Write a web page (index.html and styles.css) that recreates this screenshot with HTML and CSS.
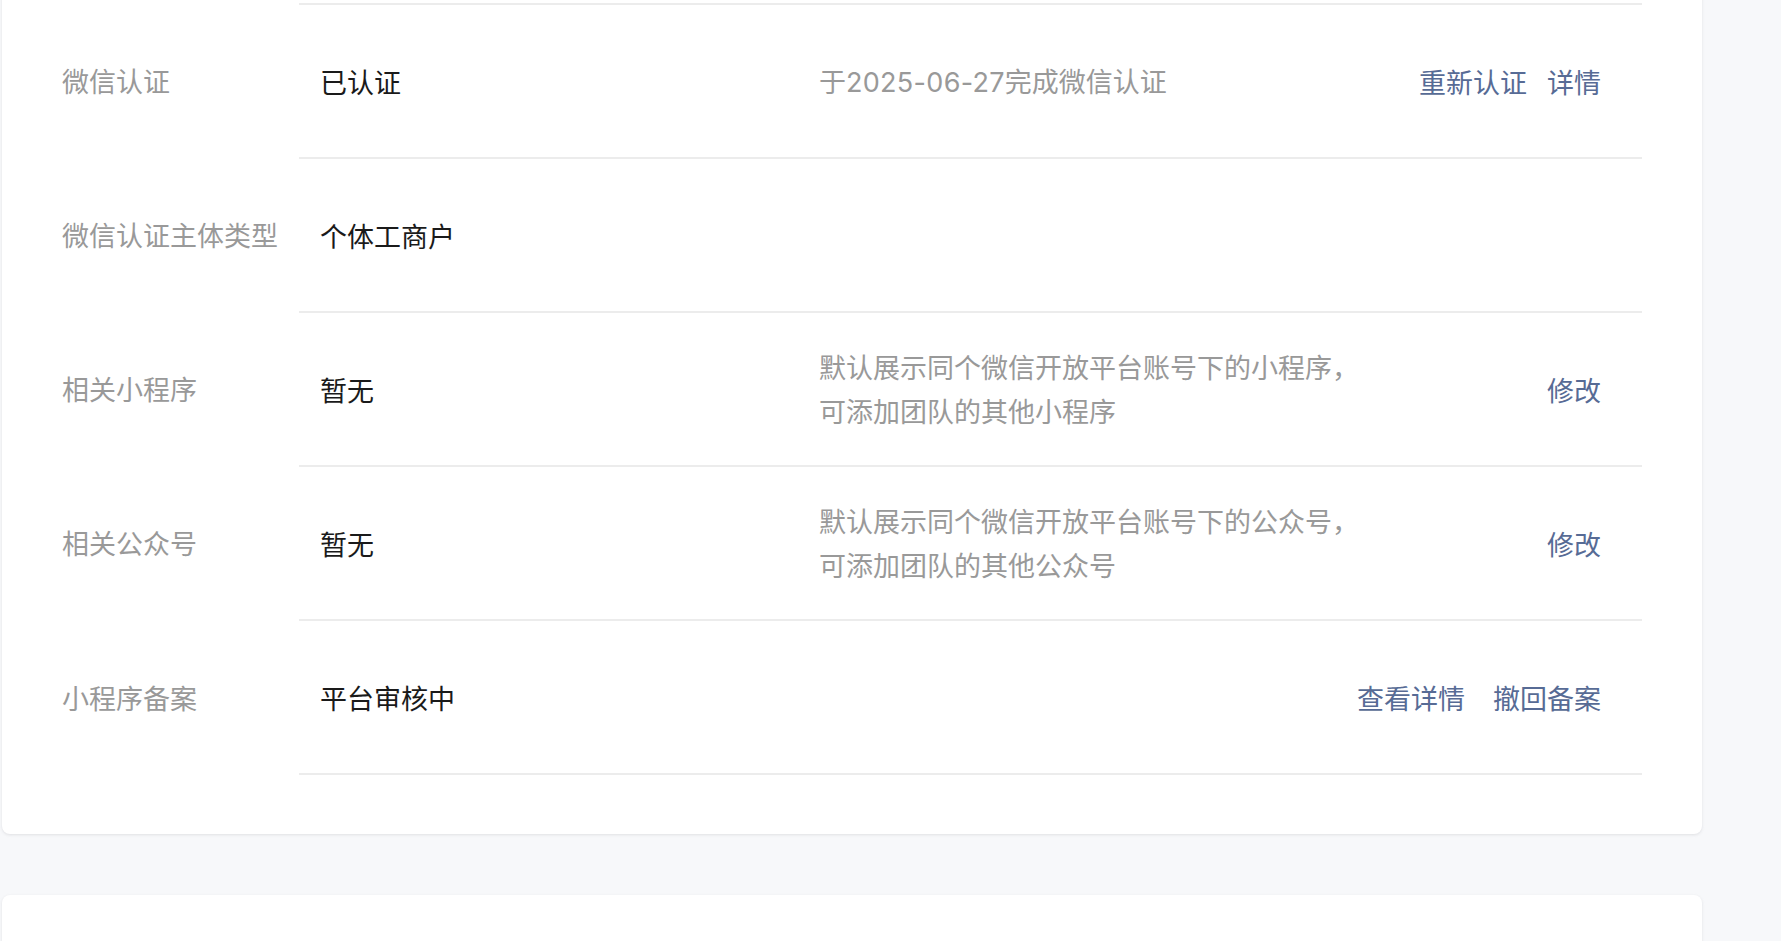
FILE: index.html
```html
<!DOCTYPE html>
<html lang="zh-CN">
<head>
<meta charset="utf-8">
<title>账号信息</title>
<link rel="stylesheet" href="styles.css">
</head>
<body>
<main class="page">
  <section class="card card-info">
    <div class="row">
      <div class="label">微信认证</div>
      <div class="cell">
        <div class="value">已认证</div>
        <div class="desc">于<span class="num">2025-06-27</span>完成微信认证</div>
        <div class="actions"><a class="link" href="#">重新认证</a><a class="link" href="#">详情</a></div>
      </div>
    </div>
    <div class="row">
      <div class="label">微信认证主体类型</div>
      <div class="cell">
        <div class="value">个体工商户</div>
        <div class="desc"></div>
        <div class="actions"></div>
      </div>
    </div>
    <div class="row">
      <div class="label">相关小程序</div>
      <div class="cell">
        <div class="value">暂无</div>
        <div class="desc">默认展示同个微信开放平台账号下的小程序，可添加团队的其他小程序</div>
        <div class="actions"><a class="link" href="#">修改</a></div>
      </div>
    </div>
    <div class="row">
      <div class="label">相关公众号</div>
      <div class="cell">
        <div class="value">暂无</div>
        <div class="desc">默认展示同个微信开放平台账号下的公众号，可添加团队的其他公众号</div>
        <div class="actions"><a class="link" href="#">修改</a></div>
      </div>
    </div>
    <div class="row row-last">
      <div class="label">小程序备案</div>
      <div class="cell">
        <div class="value">平台审核中</div>
        <div class="desc"></div>
        <div class="actions actions-wide"><a class="link" href="#">查看详情</a><a class="link" href="#">撤回备案</a></div>
      </div>
    </div>
  </section>
  <section class="card card-next"></section>
</main>
</body>
</html>
```

FILE: styles.css
```css
html, body {
  margin: 0;
  padding: 0;
  background: #f7f8fa;
  overflow: hidden;
}

body {
  font-family: "Noto Sans CJK SC", "PingFang SC", sans-serif;
  font-size: 27px;
  color: #1a1a1a;
}

.page {
  width: 1700px;
  padding-left: 2px;
}

.card {
  background: #fff;
  border-radius: 8px;
  box-shadow: 0 1px 3px rgba(140, 140, 150, 0.22);
  padding: 0 60px;
}

.card-info {
  margin-top: -40px;
  padding-top: 43px;
  padding-bottom: 59px;
}

.card-next {
  margin-top: 61px;
  height: 200px;
}

.row {
  display: grid;
  grid-template-columns: 237px 1fr;
  align-items: center;
}

.label {
  color: #999;
  white-space: nowrap;
}

.cell {
  display: flex;
  align-items: center;
  height: 152px;
  border-top: 2px solid #ececec;
  padding: 0 41px 0 21px;
}

.row-last .cell {
  border-bottom: 2px solid #ececec;
}

.value {
  flex: 0 0 499px;
}

.desc {
  flex: 1 1 auto;
  max-width: 550px;
  color: #999;
  line-height: 44px;
}

.num {
  font-family: "Inter", "Noto Sans CJK SC", sans-serif;
  font-size: 27px;
  letter-spacing: 0.3px;
  line-height: 1;
}

.actions {
  margin-left: auto;
  display: flex;
  gap: 20px;
}

.actions-wide {
  gap: 28px;
}

.link {
  color: #576b95;
  text-decoration: none;
}
```
